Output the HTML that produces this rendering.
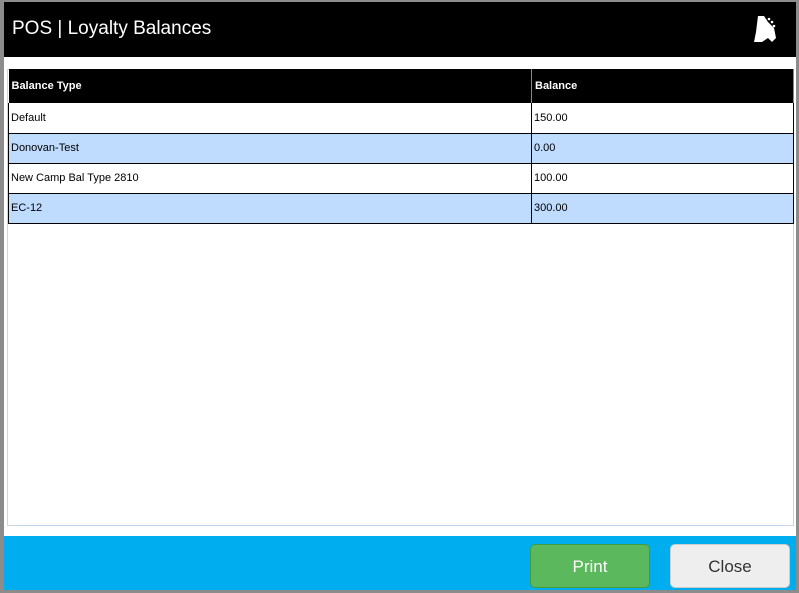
<!DOCTYPE html>
<html><head><style>
*{margin:0;padding:0;box-sizing:border-box}
body{width:799px;height:593px;background:#8c8c8c;position:relative;overflow:hidden;font-family:"Segoe UI","Liberation Sans",sans-serif}
.win{position:absolute;left:4px;top:2px;width:792px;height:588px;background:#fff}
.hdr{position:absolute;left:0;top:0;width:792px;height:55px;background:#000;color:#fff;font-size:19px;padding:16px 0 0 8px}
.box{position:absolute;left:3px;top:67px;width:787px;height:457px;border:1px solid #c5d6ee}
table{position:absolute;left:4px;top:67px;width:786px;border-collapse:collapse;font-size:11px}
th{background:#000;color:#fff;text-align:left;height:34px;font-weight:bold;padding-left:3px;border-right:1px solid #888}
td{height:30px;padding-left:2px;border:1px solid #000;border-top:none}
tr.b td{background:#bfdbfe}
.ft{position:absolute;left:0;top:534px;width:792px;height:54px;background:#00aeef}
.btn{position:absolute;top:8px;width:120px;height:44px;border-radius:5px;font-size:17px;text-align:center;line-height:44px}
</style></head><body>
<div class="win">
<div class="hdr">POS | Loyalty Balances
<svg style="position:absolute;left:746px;top:10px" width="30" height="34" viewBox="0 0 30 34"><path d="M8 4 L14 4 L18 10 L24 16 L26 26 L22 30 L18 26 L12 30 L4 30 L6 20 Z" fill="#fff"/><circle cx="19" cy="7" r="1.3" fill="#fff"/><circle cx="22" cy="10" r="1.3" fill="#fff"/><circle cx="24" cy="14" r="1.3" fill="#fff"/></svg>
</div>
<div class="box"></div>
<table>
<tr><th style="width:523px">Balance Type</th><th>Balance</th></tr>
<tr><td>Default</td><td>150.00</td></tr>
<tr class="b"><td>Donovan-Test</td><td>0.00</td></tr>
<tr><td>New Camp Bal Type 2810</td><td>100.00</td></tr>
<tr class="b"><td>EC-12</td><td>300.00</td></tr>
</table>
<div class="ft">
<div class="btn" style="left:526px;background:#5cb85c;border:1px solid #3f9c3f;color:#fff">Print</div>
<div class="btn" style="left:666px;background:#eeeeee;border:1px solid #ccc;color:#333">Close</div>
</div>
</div>
</body></html>
